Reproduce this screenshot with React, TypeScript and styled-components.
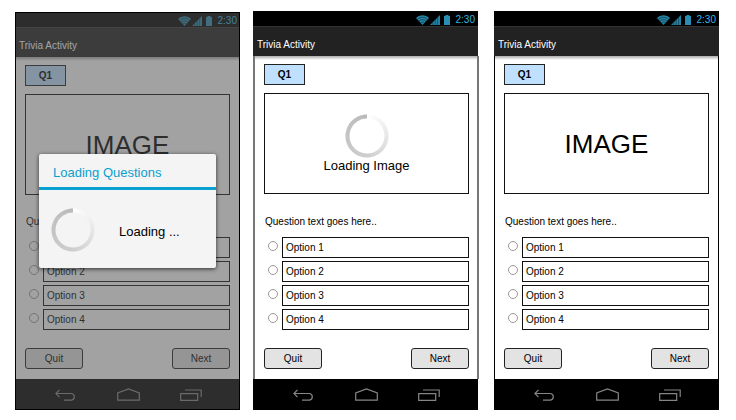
import React, { useId } from "react";
import styled, { createGlobalStyle, css } from "styled-components";

const GlobalStyle = createGlobalStyle`
  *, *::before, *::after { box-sizing: border-box; }
  body {
    margin: 0;
    background: #fff;
    color: #000;
    font-family: "Liberation Sans", Arial, Helvetica, sans-serif;
    font-size: 10px;
    line-height: 12px;
  }
  button, input { font: inherit; color: inherit; margin: 0; }
  h1, h2, p { margin: 0; font-weight: 400; }
`;

type Frame = "black" | "grey";

const Gallery = styled.main`
  display: flex;
  gap: 13px;
  padding: 11px 17px 10px 15px;
`;

const Phone = styled.section<{ $dimmed?: boolean }>`
  position: relative;
  flex: 1;
  min-width: 0;
  display: flex;
  flex-direction: column;
  ${(p) => p.$dimmed && css`margin-top: 1px;`}
  &:last-child { margin-left: 3px; }
`;

const StatusBar = styled.div`
  display: flex;
  align-items: center;
  justify-content: flex-end;
  height: 15px;
  padding: 2px 3px 0 0;
  background: #000;
  color: #33b5e5;
  svg { display: block; }
`;

const StatusIcons = styled.div`
  display: flex;
  align-items: center;
  gap: 1px;
  margin-right: 5px;
`;

const TitleBar = styled.header`
  height: 30px;
  padding: 11px 4px 0;
  border-top: 1px solid #333;
  background: #222;
  color: #fff;
`;

const Title = styled.h1`
  font-size: 10px;
  line-height: 14px;
`;

const Content = styled.form<{ $frame: Frame }>`
  flex: 1;
  display: flex;
  flex-direction: column;
  padding: 8px 9px 10px;
  border: solid #000;
  border-width: 0 1px;
  background: linear-gradient(#aaa, #fff 4px);
  ${(p) =>
    p.$frame === "grey" &&
    css`
      margin-right: -1px;
      padding-right: 8px;
      border-color: #777;
      border-width: 0 2px;
    `}
`;

const QuestionTag = styled.div`
  width: 41px;
  height: 21px;
  border: 1px solid #222;
  background: #bfe0ff;
  font-weight: 700;
  line-height: 19px;
  text-align: center;
`;

const ImageBox = styled.div`
  display: flex;
  flex-direction: column;
  align-items: center;
  justify-content: center;
  height: 101px;
  margin-top: 8px;
  border: 1px solid #111;
  svg { display: block; }
`;

const ImageWord = styled.span`
  font-size: 26px;
  line-height: 32px;
`;

const LoadingLabel = styled.span`
  font-size: 13px;
  line-height: 16px;
`;

const Question = styled.p`
  margin-top: auto;
  padding: 21px 0 9px 1px;
`;

const Options = styled.div`
  display: grid;
  gap: 3px;
`;

const OptionRow = styled.div`
  display: flex;
  align-items: center;
  gap: 4px;
  padding-left: 4px;
`;

const Radio = styled.input`
  appearance: none;
  flex: none;
  width: 10px;
  height: 10px;
  margin-bottom: 3px;
  border: 1px solid #999;
  border-radius: 50%;
  background: #fff;
  &:checked { background: #999; }
`;

const OptionLabel = styled.label`
  flex: 1;
  height: 21px;
  padding-left: 3px;
  border: 1px solid #111;
  background: #fff;
  line-height: 20px;
`;

const Actions = styled.div`
  display: flex;
  justify-content: space-between;
  margin-top: 18px;
`;

const ActionButton = styled.button`
  width: 58px;
  height: 21px;
  padding: 0;
  border: 1px solid #222;
  border-radius: 3px;
  background: #e3e3e3;
`;

const NavBar = styled.nav`
  display: flex;
  align-items: center;
  justify-content: space-between;
  height: 31px;
  padding: 0 38px 0 40px;
  background: #000;
`;

const NavButton = styled.button`
  padding: 0;
  border: 0;
  background: none;
  color: #858585;
  svg { display: block; }
`;

const Overlay = styled.div`
  position: absolute;
  inset: 0;
  display: flex;
  align-items: center;
  padding: 0 23px;
  border: 1px solid #000;
  background: rgba(83, 83, 83, 0.54);
`;

const Dialog = styled.div`
  flex: 1;
  border-radius: 2px;
  background: #f4f4f4;
  box-shadow: 0 1px 4px rgba(0, 0, 0, 0.7);
`;

const DialogTitle = styled.h2`
  padding: 11px 14px 6px;
  border-bottom: 3px solid #08a0cf;
  color: #08a0cf;
  font-size: 13px;
  line-height: 16px;
`;

const DialogBody = styled.div`
  display: flex;
  align-items: center;
  gap: 24px;
  padding: 18px 12px 16px;
  svg { display: block; }
  span { padding-top: 3px; }
`;

/* Ring that fades clockwise from white to a dark edge at twelve o'clock. */
const Spinner = () => {
  const steps = 60;
  const point = (deg: number) => {
    const a = ((deg - 90) * Math.PI) / 180;
    return `${(22 + 19.5 * Math.cos(a)).toFixed(2)} ${(22 + 19.5 * Math.sin(a)).toFixed(2)}`;
  };
  return (
    <svg width="44" height="44" viewBox="0 0 44 44" fill="none" strokeWidth="4" role="img" aria-label="Loading">
      {Array.from({ length: steps }, (_, i) => {
        const from = (i * 360) / steps;
        const to = Math.min(from + 360 / steps + 1, 360);
        const t = i / steps;
        const v = Math.round(t < 0.5 ? 255 - t * 100 : 205 - (t - 0.5) * 40);
        return <path key={i} d={`M${point(from)}A19.5 19.5 0 0 1 ${point(to)}`} stroke={`rgb(${v},${v},${v})`} />;
      })}
    </svg>
  );
};

const WifiIcon = () => (
  <svg width="13" height="10" viewBox="0 0 13 10" aria-hidden="true">
    <path d="M0 3C3.5-.8 9.5-.8 13 3L6.5 10Z" fill="#2583a6" />
    <path d="M1.6 4.4C4.4 1.6 8.6 1.6 11.4 4.4M3 6.2C5 4.2 8 4.2 10 6.2M4.6 7.8c1.2-1 2.6-1 3.8 0" fill="none" stroke="#0a2731" strokeWidth=".6" />
  </svg>
);

const SignalIcon = () => (
  <svg width="10" height="10" viewBox="0 0 10 10" aria-hidden="true">
    <path d="M0 10 10 0V10Z" fill="#2583a6" />
    <path d="M2.7 6V10M5.2 4V10M7.6 1V10" stroke="#0a2731" strokeWidth=".5" />
  </svg>
);

const BatteryIcon = () => (
  <svg width="10" height="10" viewBox="0 0 10 10" aria-hidden="true">
    <path d="M4.5 0h3v1H9v9H3V1h1.5Z" fill="#2a8eb4" />
  </svg>
);

const BackIcon = () => (
  <svg width="21" height="12" viewBox="0 0 21 12" fill="none" stroke="currentColor" strokeWidth="1.2" aria-hidden="true">
    <path d="M4.5.8.9 4.5 4.5 8.2M1 4.5h15.5a3.4 3.4 0 0 1 0 6.7H9" />
  </svg>
);

const HomeIcon = () => (
  <svg width="23" height="13" viewBox="0 0 23 13" fill="none" stroke="currentColor" strokeWidth="1.2" aria-hidden="true">
    <path d="M.7 12.2V5L11.5.9 22.3 5v7.2Z" />
  </svg>
);

const RecentsIcon = () => (
  <svg width="22" height="12" viewBox="0 0 22 12" fill="none" stroke="currentColor" strokeWidth="1.2" aria-hidden="true">
    <path d="M.7 4.6h17v6.7H.7ZM5 1h16.2v7" />
  </svg>
);

interface PhoneScreenProps {
  label: string;
  frame?: Frame;
  picture: React.ReactNode;
  dialog?: React.ReactNode;
}

const PhoneScreen = ({ label, frame = "black", picture, dialog }: PhoneScreenProps) => {
  const id = useId();
  return (
    <Phone $dimmed={Boolean(dialog)} aria-label={label}>
      <StatusBar>
        <StatusIcons>
          <WifiIcon />
          <SignalIcon />
          <BatteryIcon />
        </StatusIcons>
        <time>2:30</time>
      </StatusBar>
      <TitleBar>
        <Title>Trivia Activity</Title>
      </TitleBar>
      <Content $frame={frame}>
        <QuestionTag>Q1</QuestionTag>
        <ImageBox>{picture}</ImageBox>
        <Question id={`${id}-q`}>Question text goes here..</Question>
        <Options role="radiogroup" aria-labelledby={`${id}-q`}>
          {[1, 2, 3, 4].map((n) => (
            <OptionRow key={n}>
              <Radio type="radio" name={`${id}-option`} id={`${id}-${n}`} />
              <OptionLabel htmlFor={`${id}-${n}`}>{`Option ${n}`}</OptionLabel>
            </OptionRow>
          ))}
        </Options>
        <Actions>
          <ActionButton type="button">Quit</ActionButton>
          <ActionButton type="button">Next</ActionButton>
        </Actions>
      </Content>
      <NavBar>
        <NavButton type="button" aria-label="Back"><BackIcon /></NavButton>
        <NavButton type="button" aria-label="Home"><HomeIcon /></NavButton>
        <NavButton type="button" aria-label="Recent apps"><RecentsIcon /></NavButton>
      </NavBar>
      {dialog && <Overlay>{dialog}</Overlay>}
    </Phone>
  );
};

export default function App() {
  const loadingDialog = (
    <Dialog role="dialog" aria-label="Loading Questions">
      <DialogTitle>Loading Questions</DialogTitle>
      <DialogBody>
        <Spinner />
        <LoadingLabel>Loading ...</LoadingLabel>
      </DialogBody>
    </Dialog>
  );
  return (
    <>
      <GlobalStyle />
      <Gallery>
        <PhoneScreen label="Loading questions" picture={<ImageWord>IMAGE</ImageWord>} dialog={loadingDialog} />
        <PhoneScreen
          label="Loading image"
          frame="grey"
          picture={
            <>
              <Spinner />
              <LoadingLabel>Loading Image</LoadingLabel>
            </>
          }
        />
        <PhoneScreen label="Question ready" picture={<ImageWord>IMAGE</ImageWord>} />
      </Gallery>
    </>
  );
}
